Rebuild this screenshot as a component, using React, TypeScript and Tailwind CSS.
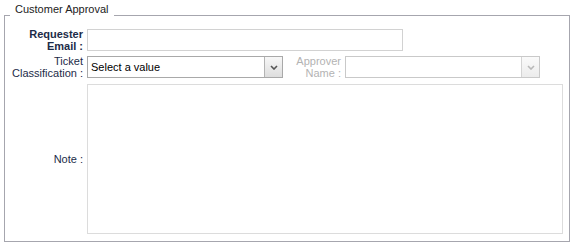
import React from "react";

function Chevron({ color }: { color: string }) {
  return (
    <svg width="8" height="5" viewBox="0 0 8 5" fill="none">
      <path d="M1 1 L4 4 L7 1" stroke={color} strokeWidth="1.6" />
    </svg>
  );
}

function SelectBox({
  width,
  text,
  disabled,
}: {
  width: string;
  text?: string;
  disabled?: boolean;
}) {
  return (
    <div
      className={`flex h-[22px] items-stretch border bg-white ${width} ${
        disabled ? "border-[#c9c9c9]" : "border-[#a9a9a9]"
      }`}
    >
      <div className="flex flex-1 items-center pl-[3px] text-[11px] text-black">{text}</div>
      <div
        className={`flex w-[18px] items-center justify-center border-l bg-gradient-to-b ${
          disabled
            ? "border-[#d4d4d4] from-[#fafafa] to-[#ececec]"
            : "border-[#b4b4b4] from-[#f7f7f7] to-[#dedede]"
        }`}
      >
        <Chevron color={disabled ? "#b8b8b8" : "#555"} />
      </div>
    </div>
  );
}

export default function App() {
  return (
    <div className="h-[250px] w-[576px] bg-white pt-[3px] font-['Liberation_Sans',Arial,sans-serif] text-[11px]">
      <fieldset className="ml-[4px] w-[566px] border border-[#a6a6ae] px-0 pt-0 pb-[7px]">
        <legend className="ml-[5px] px-[5px] pb-[12px] leading-[13px] text-[#222]">
          Customer Approval
        </legend>

        {/* requester */}
        <div className="flex h-[24px] items-center">
          <div className="w-[78px] text-right font-bold leading-[12px] text-[#1c2b48]">
            Requester
            <br />
            Email :
          </div>
          <input
            type="text"
            className="ml-[4px] h-[22px] w-[316px] border border-[#d2d2d2] bg-white outline-none"
          />
        </div>

        {/* ticket + approver */}
        <div className="mt-[3px] flex h-[24px] items-center">
          <div className="w-[78px] text-right leading-[12px] text-[#1c2b48]">
            Ticket
            <br />
            Classification :
          </div>
          <div className="ml-[4px]">
            <SelectBox width="w-[196px]" text="Select a value" />
          </div>
          <div className="w-[58px] text-right leading-[12px] text-[#b3b3b3]">
            Approver
            <br />
            Name :
          </div>
          <div className="ml-[4px]">
            <SelectBox width="w-[195px]" disabled />
          </div>
        </div>

        {/* note */}
        <div className="mt-[5px] flex items-center">
          <div className="w-[78px] text-right leading-[12px] text-[#1c2b48]">Note :</div>
          <textarea className="ml-[4px] h-[150px] w-[476px] resize-none border border-[#dcdcdc] bg-white outline-none" />
        </div>
      </fieldset>
    </div>
  );
}
